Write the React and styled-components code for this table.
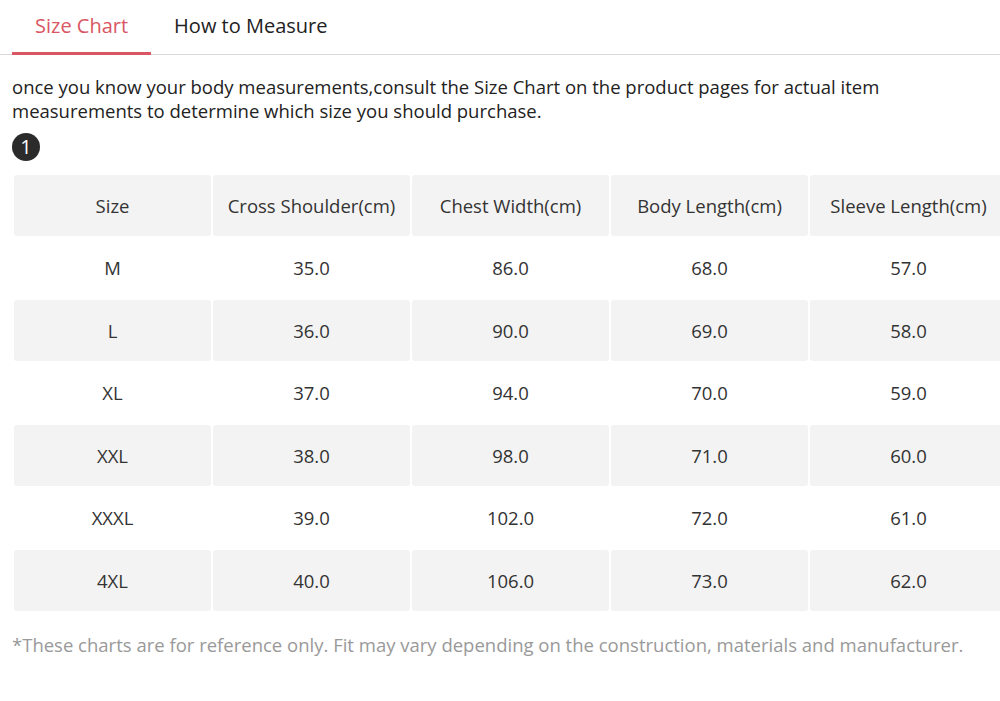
import React from "react";
import styled, { createGlobalStyle } from "styled-components";

const GlobalStyle = createGlobalStyle`
  body {
    margin: 0;
    background: #fff;
    overflow: hidden;
    font-family: "Open Sans", "Noto Sans", sans-serif;
    color: #333;
  }
`;

const headers = [
  "Size",
  "Cross Shoulder(cm)",
  "Chest Width(cm)",
  "Body Length(cm)",
  "Sleeve Length(cm)",
];

const rows = [
  ["M", "35.0", "86.0", "68.0", "57.0"],
  ["L", "36.0", "90.0", "69.0", "58.0"],
  ["XL", "37.0", "94.0", "70.0", "59.0"],
  ["XXL", "38.0", "98.0", "71.0", "60.0"],
  ["XXXL", "39.0", "102.0", "72.0", "61.0"],
  ["4XL", "40.0", "106.0", "73.0", "62.0"],
];

export default function App() {
  return (
    <Page>
      <GlobalStyle />

      {/* Tabs */}
      <Tabs>
        <Tab $active>Size Chart</Tab>
        <Tab>How to Measure</Tab>
      </Tabs>

      {/* Intro */}
      <Intro>
        once you know your body measurements,consult the Size Chart on the
        product pages for actual item measurements to determine which size you
        should purchase.
      </Intro>
      <Badge>1</Badge>

      {/* Chart */}
      <Table>
        <thead>
          <tr>
            {headers.map((h) => (
              <Cell as="th" key={h} $shaded>
                {h}
              </Cell>
            ))}
          </tr>
        </thead>
        <tbody>
          {rows.map((row, i) => (
            <tr key={row[0]}>
              {row.map((v, j) => (
                <Cell key={j} $shaded={i % 2 === 1}>
                  {v}
                </Cell>
              ))}
            </tr>
          ))}
        </tbody>
      </Table>

      <Note>
        *These charts are for reference only. Fit may vary depending on the
        construction, materials and manufacturer.
      </Note>
    </Page>
  );
}

const Page = styled.div`
  width: 1000px;
  padding: 0 0 0 12px;
  box-sizing: border-box;
`;

// - tabs
const Tabs = styled.div`
  display: flex;
  height: 55px;
  margin-left: -12px;
  padding-left: 12px;
  border-bottom: 1px solid #d9d9d9;
  box-sizing: border-box;
`;
const Tab = styled.div`
  display: flex;
  align-items: center;
  padding: 0 23px 2px;
  margin-bottom: -1px;
  font-size: 20px;
  color: ${(p) => (p.$active ? "#d95663" : "#222")};
  border-bottom: 3px solid ${(p) => (p.$active ? "#d95663" : "transparent")};
`;

// - intro
const Intro = styled.p`
  margin: 20px 0 0;
  font-size: 18.5px;
  line-height: 24px;
  color: #222;
  padding-right: 100px;
`;
const Badge = styled.div`
  margin-top: 10px;
  width: 28px;
  height: 28px;
  border-radius: 50%;
  background: #2b2b2b;
  color: #fff;
  font-size: 20px;
  line-height: 28px;
  text-align: center;
`;

// - table
const Table = styled.table`
  margin: 12px 0 0;
  width: 997px;
  table-layout: fixed;
  border-collapse: separate;
  border-spacing: 2px;
`;
const Cell = styled.td`
  height: 60.5px;
  padding: 0;
  text-align: center;
  vertical-align: middle;
  font-size: 18.5px;
  font-weight: 400;
  color: #333;
  border-radius: 3px;
  background: ${(p) => (p.$shaded ? "#f3f3f3" : "#fff")};
`;

const Note = styled.p`
  margin: 20px 0 0;
  font-size: 18.5px;
  line-height: 24px;
  color: #999;
`;
